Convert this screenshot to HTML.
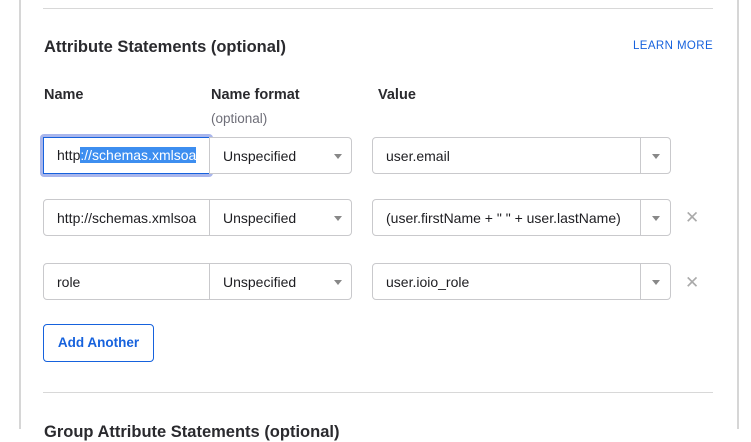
<!DOCTYPE html>
<html><head><style>
body{margin:0;width:751px;height:429px;overflow:hidden;background:#fff;font-family:"Liberation Sans",sans-serif;color:#1d1d21;position:relative}
.a{position:absolute}
.box{position:absolute;border:1px solid #c9c9cc;box-sizing:border-box;background:#fff;font-size:14px;line-height:36px;padding-left:13px;white-space:nowrap;overflow:hidden}
.arr{position:absolute;width:0;height:0;border-left:4px solid transparent;border-right:4px solid transparent;border-top:5px solid #888}
.x{position:absolute;font-size:17px;color:#aaa;line-height:17px}
</style></head><body>
<div class="a" style="left:19px;top:0;width:2px;height:429px;background:#d6d6d6"></div>
<div class="a" style="left:737px;top:0;width:2px;height:429px;background:#d6d6d6"></div>
<div class="a" style="left:43px;top:8px;width:670px;height:1px;background:#d8d8d8"></div>
<div class="a" style="left:44px;top:38px;font-size:16.5px;font-weight:bold;color:#2a2a2e">Attribute Statements (optional)</div>
<div class="a" style="left:633px;top:40px;font-size:11.5px;color:#1662dd;letter-spacing:.4px">LEARN MORE</div>
<div class="a" style="left:44px;top:87px;font-size:14.5px;font-weight:bold;color:#2a2a2e">Name</div>
<div class="a" style="left:211px;top:87px;font-size:14.5px;font-weight:bold;color:#2a2a2e">Name format</div>
<div class="a" style="left:211px;top:111px;font-size:13.5px;color:#6e6e78">(optional)</div>
<div class="a" style="left:378px;top:87px;font-size:14.5px;font-weight:bold;color:#2a2a2e">Value</div>

<div class="a" style="left:40px;top:134px;width:173px;height:43px;border-radius:4px;background:#a9b6ec"></div>
<div class="box" style="left:43px;top:137px;width:167px;height:37px;border:1.5px solid #1662dd;padding-left:13px;line-height:34px">http<span style="background:#3d8ef0;color:#fff">://schemas.xmlsoa</span></div>
<div class="box" style="left:209px;top:137px;width:143px;height:37px;border-radius:0 4px 4px 0">Unspecified</div><div class="arr" style="left:334px;top:154px"></div>
<div class="box" style="left:372px;top:137px;width:299px;height:37px;border-radius:4px">user.email</div><div class="a" style="left:640px;top:137px;width:1px;height:37px;background:#c9c9cc"></div><div class="arr" style="left:652px;top:154px"></div>

<div class="box" style="left:43px;top:199px;width:167px;height:37px;border-radius:4px 0 0 4px">http://schemas.xmlsoa</div>
<div class="box" style="left:209px;top:199px;width:143px;height:37px;border-radius:0 4px 4px 0">Unspecified</div><div class="arr" style="left:334px;top:216px"></div>
<div class="box" style="left:372px;top:199px;width:299px;height:37px;border-radius:4px">(user.firstName + " " + user.lastName)</div><div class="a" style="left:640px;top:199px;width:1px;height:37px;background:#c9c9cc"></div><div class="arr" style="left:652px;top:216px"></div>
<div class="x" style="left:685px;top:209px">✕</div>

<div class="box" style="left:43px;top:263px;width:167px;height:37px;border-radius:4px 0 0 4px">role</div>
<div class="box" style="left:209px;top:263px;width:143px;height:37px;border-radius:0 4px 4px 0">Unspecified</div><div class="arr" style="left:334px;top:280px"></div>
<div class="box" style="left:372px;top:263px;width:299px;height:37px;border-radius:4px">user.ioio_role</div><div class="a" style="left:640px;top:263px;width:1px;height:37px;background:#c9c9cc"></div><div class="arr" style="left:652px;top:280px"></div>
<div class="x" style="left:685px;top:274px">✕</div>

<div class="a" style="left:43px;top:324px;width:111px;height:38px;box-sizing:border-box;border:1px solid #1662dd;border-radius:4px;color:#1662dd;font-size:13.5px;font-weight:bold;text-align:center;line-height:36px">Add Another</div>
<div class="a" style="left:43px;top:392px;width:670px;height:1px;background:#d8d8d8"></div>
<div class="a" style="left:44px;top:423px;font-size:16.5px;font-weight:bold;color:#2a2a2e">Group Attribute Statements (optional)</div>
</body></html>
